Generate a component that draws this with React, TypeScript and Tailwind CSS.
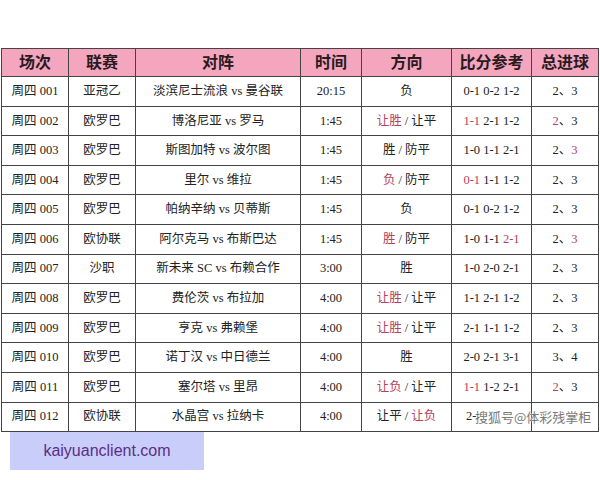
import React from "react";

type Part = string | { red: string };

type Row = {
  no: string;
  league: string;
  match: string;
  time: string;
  pick: Part[];
  score: Part[];
  goals: Part[];
};

const rows: Row[] = [
  { no: "001", league: "亚冠乙", match: "淡滨尼士流浪 vs 曼谷联", time: "20:15", pick: ["负"], score: ["0-1 0-2 1-2"], goals: ["2、3"] },
  { no: "002", league: "欧罗巴", match: "博洛尼亚 vs 罗马", time: "1:45", pick: [{ red: "让胜" }, " / 让平"], score: [{ red: "1-1" }, " 2-1 1-2"], goals: [{ red: "2" }, "、3"] },
  { no: "003", league: "欧罗巴", match: "斯图加特 vs 波尔图", time: "1:45", pick: ["胜 / 防平"], score: ["1-0 1-1 2-1"], goals: ["2、", { red: "3" }] },
  { no: "004", league: "欧罗巴", match: "里尔 vs 维拉", time: "1:45", pick: [{ red: "负" }, " / 防平"], score: [{ red: "0-1" }, " 1-1 1-2"], goals: ["2、3"] },
  { no: "005", league: "欧罗巴", match: "帕纳辛纳 vs 贝蒂斯", time: "1:45", pick: ["负"], score: ["0-1 0-2 1-2"], goals: ["2、3"] },
  { no: "006", league: "欧协联", match: "阿尔克马 vs 布斯巴达", time: "1:45", pick: [{ red: "胜" }, " / 防平"], score: ["1-0 1-1 ", { red: "2-1" }], goals: ["2、", { red: "3" }] },
  { no: "007", league: "沙职", match: "新未来 SC vs 布赖合作", time: "3:00", pick: ["胜"], score: ["1-0 2-0 2-1"], goals: ["2、3"] },
  { no: "008", league: "欧罗巴", match: "费伦茨 vs 布拉加", time: "4:00", pick: [{ red: "让胜" }, " / 让平"], score: ["1-1 2-1 1-2"], goals: ["2、3"] },
  { no: "009", league: "欧罗巴", match: "亨克 vs 弗赖堡", time: "4:00", pick: [{ red: "让胜" }, " / 让平"], score: ["2-1 1-1 1-2"], goals: ["2、3"] },
  { no: "010", league: "欧罗巴", match: "诺丁汉 vs 中日德兰", time: "4:00", pick: ["胜"], score: ["2-0 2-1 3-1"], goals: ["3、4"] },
  { no: "011", league: "欧罗巴", match: "塞尔塔 vs 里昂", time: "4:00", pick: [{ red: "让负" }, " / 让平"], score: [{ red: "1-1" }, " 1-2 2-1"], goals: [{ red: "2" }, "、3"] },
];

const headers = ["场次", "联赛", "对阵", "时间", "方向", "比分参考", "总进球"];

function Parts({ parts }: { parts: Part[] }) {
  return (
    <>
      {parts.map((p, i) =>
        typeof p === "string" ? (
          <span key={i}>{p}</span>
        ) : (
          <span key={i} className="text-[#b4415e]">
            {p.red}
          </span>
        )
      )}
    </>
  );
}

const cell = "border border-[#444] text-center align-middle p-0";

export default function App() {
  return (
    <div className="w-[600px] h-[480px] bg-white pt-12 pl-px font-['Liberation_Serif','Noto_Sans_CJK_SC',serif] text-[#222]">
      <table className="border-collapse table-fixed w-[597px]">
        <colgroup>
          <col className="w-[67px]" />
          <col className="w-[67px]" />
          <col className="w-[165px]" />
          <col className="w-[61px]" />
          <col className="w-[90px]" />
          <col className="w-[80px]" />
          <col className="w-[67px]" />
        </colgroup>
        <thead>
          <tr className="h-7 bg-[#f4a6bf]">
            {headers.map((h) => (
              <th key={h} className={`${cell} text-[16px] font-bold text-[#2a1a20]`}>
                {h}
              </th>
            ))}
          </tr>
        </thead>
        <tbody className="text-[12.5px]">
          {rows.map((r) => (
            <tr key={r.no} className="h-[29.6px]">
              <td className={cell}>周四 {r.no}</td>
              <td className={cell}>{r.league}</td>
              <td className={cell}>{r.match}</td>
              <td className={cell}>{r.time}</td>
              <td className={cell}>
                <Parts parts={r.pick} />
              </td>
              <td className={cell}>
                <Parts parts={r.score} />
              </td>
              <td className={cell}>
                <Parts parts={r.goals} />
              </td>
            </tr>
          ))}
          <tr className="h-[29.6px]">
            <td className={cell}>周四 012</td>
            <td className={cell}>欧协联</td>
            <td className={cell}>水晶宫 vs 拉纳卡</td>
            <td className={cell}>4:00</td>
            <td className={cell}>
              <Parts parts={["让平 / ", { red: "让负" }]} />
            </td>
            <td className={`${cell} text-left`}>
              <div className="relative pl-[14px]">
                <span>2-</span>
                <span className="absolute left-[23px] top-1/2 -translate-y-1/2 whitespace-nowrap text-[13px] font-['Noto_Sans_CJK_SC',sans-serif] text-[#7a7a7a] [text-shadow:0_0_1px_#fff,0_0_2px_#fff]">
                  搜狐号@体彩残掌柜
                </span>
              </div>
            </td>
            <td className={cell}></td>
          </tr>
        </tbody>
      </table>
      <div className="ml-[9px] w-[194px] h-[38px] bg-[#c9cdfa] flex items-center justify-center">
        <span className="text-[16px] text-[#5b2d86] font-['Liberation_Sans',Arial,sans-serif]">
          kaiyuanclient.com
        </span>
      </div>
    </div>
  );
}
